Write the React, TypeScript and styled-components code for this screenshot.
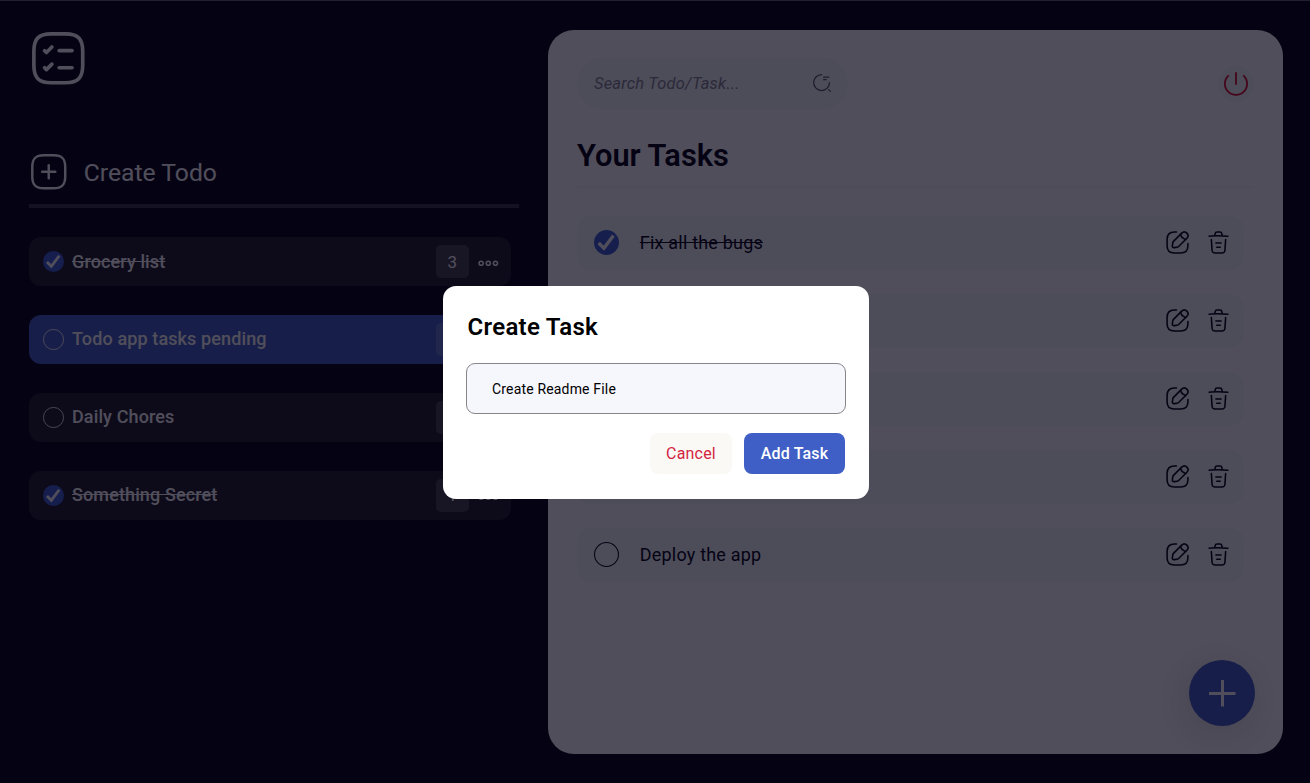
import React from "react";
import styled, { createGlobalStyle } from "styled-components";

const GlobalStyle = createGlobalStyle`
  * { box-sizing: border-box; }
  html, body { margin: 0; height: 100%; overflow: hidden; background: #050314; }
  body, input, button { font-family: Roboto, "Liberation Sans", sans-serif; }
  #root { height: 100%; }
  h1, h2, ul { margin: 0; padding: 0; list-style: none; }
`;

const Page = styled.div`
  display: grid;
  grid-template-columns: 490px 735px;
  column-gap: 29px;
  height: 783px;
  padding: 28.5px 27px 28px 29px;
  border-top: 1px solid #65646f;
  background: #050314;
  color: #fff;
`;

const Sidebar = styled.aside`
  display: flex;
  flex-direction: column;
`;

const Logo = styled.div`
  height: 58px;
  margin: -0.7px 0 65.2px -0.4px;
`;

const CreateTodo = styled.div`
  display: flex;
  align-items: center;
  gap: 15.3px;
  height: 56px;
  padding-bottom: 12px;
  margin-bottom: 29.1px;
  border-bottom: 4px solid rgba(255, 255, 255, 0.2);
  font-size: 24.7px;
  line-height: 31px;
  font-weight: 400;
`;

const TodoList = styled.ul`
  display: flex;
  flex-direction: column;
  gap: 29px;
  width: 482px;
`;

const TodoRow = styled.li<{ $active?: boolean }>`
  display: flex;
  align-items: center;
  height: 48.9px;
  padding: 0 10px 0 14px;
  border-radius: 12px;
  background: ${(p) => (p.$active ? "#3f5fc6" : "rgba(255,255,255,0.1)")};
`;

const TodoLabel = styled.span<{ $done?: boolean }>`
  flex: 1;
  margin-left: 8px;
  padding-bottom: 1px;
  font-size: 18px;
  line-height: 21px;
  font-weight: 500;
  letter-spacing: 0.12px;
  text-decoration: ${(p) => (p.$done ? "line-through" : "none")};
`;

const Badge = styled.span`
  display: flex;
  align-items: center;
  justify-content: center;
  width: 33px;
  height: 33px;
  margin-right: 7px;
  border-radius: 5px;
  background: rgba(255, 255, 255, 0.17);
  font-size: 17px;
`;

const Panel = styled.main`
  position: relative;
  height: 724px;
  padding: 28px 30px 0 29px;
  border-radius: 26px;
  background: #fff;
  color: #050314;
`;

const TopBar = styled.div`
  display: flex;
  align-items: center;
  justify-content: space-between;
  margin-right: -1px;
`;

const SearchBox = styled.div`
  display: flex;
  align-items: center;
  justify-content: space-between;
  width: 271px;
  height: 51px;
  padding: 0 16px 0 17px;
  border-radius: 25px;
  background: #f2fafb;
  color: #555463;
`;

const Placeholder = styled.span`
  font-size: 16.4px;
  font-style: italic;
  letter-spacing: 0.25px;
  color: #85848f;
`;

const PowerButton = styled.span`
  display: flex;
  align-items: center;
  justify-content: center;
  width: 36px;
  height: 36px;
  margin-top: 1px;
  border-radius: 50%;
  background: #f5fafb;
`;

const Title = styled.h1`
  width: 676px;
  height: 79px;
  padding-top: 28px;
  margin-bottom: 28px;
  border-bottom: 2px solid #f5f8fa;
  font-size: 30.8px;
  line-height: 38px;
  font-weight: 600;
`;

const TaskList = styled.ul`
  display: flex;
  flex-direction: column;
  gap: 24px;
`;

const TaskRow = styled.li`
  display: flex;
  align-items: center;
  width: 667px;
  height: 54px;
  padding: 0 13px 0 17px;
  border-radius: 14px;
  background: #f2fafb;
`;

const TaskLabel = styled.span<{ $done?: boolean }>`
  flex: 1;
  margin-left: 20.8px;
  font-size: 18px;
  letter-spacing: 0.2px;
  text-decoration: ${(p) => (p.$done ? "line-through" : "none")};
`;

const RowActions = styled.span`
  display: flex;
  gap: 16px;
`;

const AddButton = styled.div`
  position: absolute;
  right: 28px;
  bottom: 28px;
  display: flex;
  align-items: center;
  justify-content: center;
  width: 66px;
  height: 66px;
  border-radius: 50%;
  background: #3f5fc6;
  box-shadow: -4px 8px 44px rgba(5, 3, 20, 0.14);
`;

const Overlay = styled.div`
  position: fixed;
  inset: 0;
  display: flex;
  align-items: center;
  justify-content: center;
  padding: 1px 0 0 2px;
  background: rgba(5, 3, 20, 0.7);
`;

const Dialog = styled.section`
  width: 426px;
  height: 213px;
  padding: 25px 24px 0;
  border-radius: 13px;
  background: #fff;
  color: #000;
`;

const DialogTitle = styled.h2`
  margin-left: 0.5px;
  height: 52px;
  font-size: 24px;
  line-height: 32px;
  font-weight: 600;
  letter-spacing: 0.3px;
`;

const Field = styled.input`
  display: block;
  width: 380px;
  height: 51px;
  margin: 0 -1px 19px;
  padding: 2px 25px 0;
  border: 1px solid #85858a;
  border-radius: 9px;
  outline: none;
  background: #f6f6fd;
  color: #000;
  font-size: 14px;
  letter-spacing: 0.17px;
`;

const ButtonBar = styled.div`
  display: flex;
  justify-content: flex-end;
  gap: 12px;
`;

const DialogButton = styled.button<{ $primary?: boolean }>`
  width: ${(p) => (p.$primary ? "101px" : "82px")};
  height: 41px;
  padding: 0;
  border: 0;
  border-radius: 8px;
  background: ${(p) => (p.$primary ? "#3f5fc6" : "#faf9f6")};
  color: ${(p) => (p.$primary ? "#fff" : "#d4243f")};
  font-size: 16px;
  font-weight: ${(p) => (p.$primary ? 500 : 400)};
  letter-spacing: 0.18px;
`;

const SQUARE = "M9 22h6c5 0 7-2 7-7V9c0-5-2-7-7-7H9C4 2 2 4 2 9v6c0 5 2 7 7 7z";

const ICONS = {
  logo: [
    SQUARE,
    "M12.37 8.88h5.25",
    "M6.38 8.88l.75.75 2.25-2.25",
    "M12.37 15.88h5.25",
    "M6.38 15.88l.75.75 2.25-2.25",
  ],
  addSquare: [SQUARE, "M8 12h8", "M12 16V8"],
  search: [
    "M14 5h6",
    "M14 8h3",
    "M21 11.5c0 5.25-4.25 9.5-9.5 9.5S2 16.75 2 11.5 6.25 2 11.5 2",
    "M22 22l-2-2",
  ],
  edit: [
    "M11 2H9C4 2 2 4 2 9v6c0 5 2 7 7 7h6c5 0 7-2 7-7v-2",
    "M16.04 3.02L8.16 10.9c-.3.3-.6.89-.66 1.32l-.43 3.01c-.16 1.09.61 1.85 1.7 1.7l3.01-.43c.42-.06 1.01-.36 1.32-.66l7.88-7.88c1.36-1.36 2-2.94 0-4.94-2-2-3.58-1.36-4.94 0z",
    "M14.91 4.15a7.144 7.144 0 004.94 4.94",
  ],
  trash: [
    "M21 5.98c-3.33-.33-6.68-.5-10.02-.5-1.98 0-3.96.1-5.94.3L3 5.98",
    "M8.5 4.97l.22-1.31C8.88 2.71 9 2 10.69 2h2.62c1.69 0 1.82.75 1.97 1.67l.22 1.3",
    "M18.85 9.14l-.65 10.07C18.09 20.78 18 22 15.21 22H8.79C6 22 5.91 20.78 5.8 19.21L5.15 9.14",
    "M10.33 16.5h3.33",
    "M9.5 12.5h5",
  ],
  more: [
    "M5 10a2 2 0 100 4 2 2 0 000-4z",
    "M12 10a2 2 0 100 4 2 2 0 000-4z",
    "M19 10a2 2 0 100 4 2 2 0 000-4z",
  ],
};

const IconSvg = styled.svg`
  display: block;
  flex: none;
  fill: none;
  stroke: currentColor;
  stroke-width: 1.5;
  stroke-linecap: round;
  stroke-linejoin: round;
`;

const MoreSlot = styled.span`
  padding: 4px 0.7px 0 0;
`;

const CheckSvg = styled.svg`
  display: block;
  flex: none;
`;

function Icon({ name, size }: { name: keyof typeof ICONS; size: number }) {
  return (
    <IconSvg width={size} height={size} viewBox="0 0 24 24">
      {ICONS[name].map((d) => (
        <path key={d} d={d} />
      ))}
    </IconSvg>
  );
}

function Check({ done, size }: { done?: boolean; size: number }) {
  return (
    <CheckSvg width={size} height={size} viewBox="0 0 24 24" fill="none">
      {done ? (
        <>
          <circle cx="12" cy="12" r="12" fill="#3d60d6" />
          <path d="M4.5 12.5l5 5L18.6 5.4" stroke="#fff" strokeWidth="3.2" />
        </>
      ) : (
        <circle cx="12" cy="12" r="11.5" stroke="currentColor" strokeWidth="1" />
      )}
    </CheckSvg>
  );
}

const todos = [
  { label: "Grocery list", done: true, count: "3" },
  { label: "Todo app tasks pending", active: true, count: "" },
  { label: "Daily Chores", count: "" },
  { label: "Something Secret", done: true, count: "1" },
];

const tasks = [
  { id: 1, label: "Fix all the bugs", done: true },
  { id: 2, label: "" },
  { id: 3, label: "" },
  { id: 4, label: "" },
  { id: 5, label: "Deploy the app" },
];

export default function App() {
  return (
    <>
      <GlobalStyle />
      <Page>
        <Sidebar>
          <Logo>
            <Icon name="logo" size={58.6} />
          </Logo>
          <CreateTodo>
            <Icon name="addSquare" size={39.5} />
            Create Todo
          </CreateTodo>
          <TodoList>
            {todos.map((t) => (
              <TodoRow key={t.label} $active={t.active}>
                <Check done={t.done} size={21} />
                <TodoLabel $done={t.done}>{t.label}</TodoLabel>
                <Badge>{t.count}</Badge>
                <MoreSlot>
                  <Icon name="more" size={24.6} />
                </MoreSlot>
              </TodoRow>
            ))}
          </TodoList>
        </Sidebar>
        <Panel>
          <TopBar>
            <SearchBox>
              <Placeholder>Search Todo/Task...</Placeholder>
              <Icon name="search" size={20} />
            </SearchBox>
            <PowerButton>
              <svg width="26" height="26" viewBox="0 0 26 26" fill="none" stroke="#d80f2a" strokeWidth="1.8">
                <path d="M5.8 4.4a11.1 11.1 0 1 0 14.4 0M13 1.2v12.6" />
              </svg>
            </PowerButton>
          </TopBar>
          <Title>Your Tasks</Title>
          <TaskList>
            {tasks.map((t) => (
              <TaskRow key={t.id}>
                <Check done={t.done} size={25} />
                <TaskLabel $done={t.done}>{t.label}</TaskLabel>
                <RowActions>
                  <Icon name="edit" size={25} />
                  <Icon name="trash" size={25} />
                </RowActions>
              </TaskRow>
            ))}
          </TaskList>
          <AddButton>
            <svg width="28" height="28" viewBox="0 0 28 28" stroke="#fff" strokeWidth="3">
              <path d="M14.5 1v26.5M1 14.5h26.5" />
            </svg>
          </AddButton>
        </Panel>
      </Page>
      <Overlay>
        <Dialog>
          <DialogTitle>Create Task</DialogTitle>
          <Field defaultValue="Create Readme File" />
          <ButtonBar>
            <DialogButton>Cancel</DialogButton>
            <DialogButton $primary>Add Task</DialogButton>
          </ButtonBar>
        </Dialog>
      </Overlay>
    </>
  );
}
